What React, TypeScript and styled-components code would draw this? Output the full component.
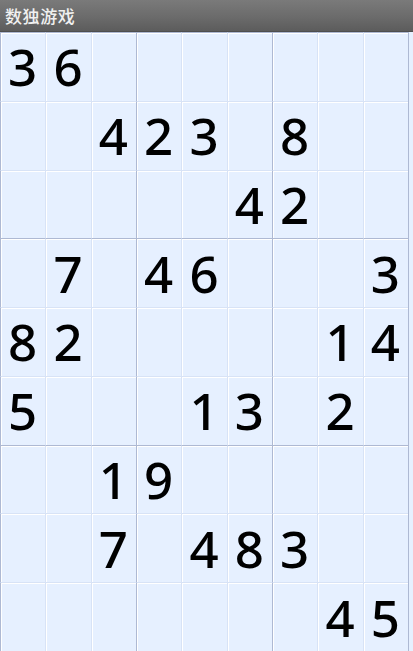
import styled, { createGlobalStyle } from 'styled-components'

const GlobalStyle = createGlobalStyle`
    html, body {
        margin: 0;
        padding: 0;
        background: #e6f0ff;
    }
    body {
        width: 413px;
        height: 651px;
        overflow: hidden;
        font-family: 'Noto Sans', 'Open Sans', sans-serif;
    }
`

const PUZZLE = '360000000004230800000004200070460003820000014500013020001900000007048300000000045'

const Screen = styled.div`
    width: 413px;
    height: 651px;
    display: flex;
    flex-direction: column;
    background: #e6f0ff;
`

const TitleBar = styled.div`
    height: 32px;
    flex: none;
    display: flex;
    align-items: center;
    padding-left: 5px;
    box-sizing: border-box;
    background: linear-gradient(#7a7a7a, #6b6b6b 55%, #5c5c5c);
    border-bottom: 1px solid #4e4e4e;
    color: #f0f0f0;
    font-family: 'Noto Sans CJK SC', 'Noto Sans', sans-serif;
    font-weight: 500;
    font-size: 17px;
    letter-spacing: 0.6px;
`

const Board = styled.div`
    width: 408px;
    height: 619px;
    display: grid;
    grid-template-columns: repeat(9, 1fr);
    grid-template-rows: repeat(9, 1fr);
    border-right: 1px solid #aeb9d3;
    box-sizing: content-box;
`

const Cell = styled.div<{ $row: number; $col: number }>`
    display: flex;
    align-items: center;
    justify-content: center;
    border-top: 1px solid ${(p) => (p.$row % 3 === 0 ? '#aeb9d3' : '#d8e3f6')};
    border-left: 1px solid ${(p) => (p.$col % 3 === 0 ? '#aeb9d3' : '#d8e3f6')};
    box-shadow: inset 1px 1px 0 #ffffff;
    color: #000;
    font-family: 'Noto Sans', 'Open Sans', sans-serif;
    font-size: 51px;
    font-weight: 500;
    line-height: 1;
    padding-right: 1px;
`

export default function App() {
    const cells = PUZZLE.split('')
    return (
        <>
            <GlobalStyle />
            <Screen>
                <TitleBar>数独游戏</TitleBar>
                <Board>
                    {cells.map((ch, i) => (
                        <Cell key={i} $row={Math.floor(i / 9)} $col={i % 9}>
                            {ch === '0' ? '' : ch}
                        </Cell>
                    ))}
                </Board>
            </Screen>
        </>
    )
}
